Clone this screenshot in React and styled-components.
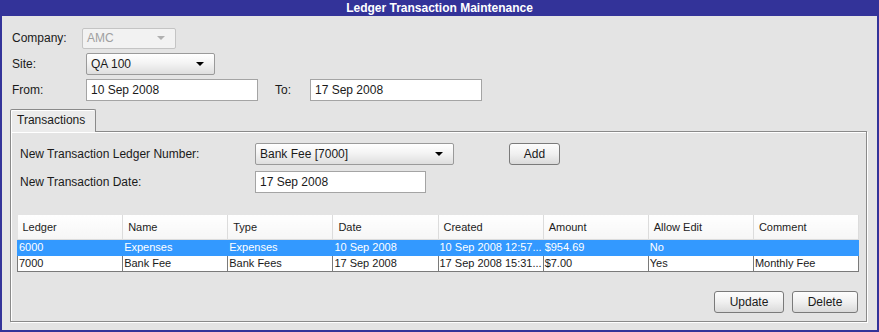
import React from 'react';
import styled, { createGlobalStyle } from 'styled-components';

const GlobalStyle = createGlobalStyle`
  body {
    margin: 0;
    background: #e4e4e4;
    font-family: "Liberation Sans", Arial, sans-serif;
  }
`;

const Window = styled.div`
  width: 879px;
  height: 332px;
  box-sizing: border-box;
  border: 2px solid #333399;
  border-top: none;
  background: #e4e4e4;
  display: flex;
  flex-direction: column;
  font-size: 12px;
  color: #1a1a1a;
`;

const TitleBar = styled.div`
  height: 16px;
  margin: 0 -2px;
  background: #333399;
  color: #fff;
  font-weight: bold;
  font-size: 12px;
  line-height: 16px;
  text-align: center;
`;

const TopForm = styled.div`
  display: flex;
  flex-direction: column;
  gap: 5px;
  padding: 12px 0 0 10px;
`;

const Row = styled.div`
  display: flex;
  align-items: center;
  height: ${(p) => p.$h || 21}px;
`;

const Label = styled.span`
  width: ${(p) => p.$w}px;
  margin-left: ${(p) => p.$ml || 0}px;
  flex-shrink: 0;
  white-space: nowrap;
`;

const Combo = styled.div`
  width: ${(p) => p.$w}px;
  height: ${(p) => p.$h || 21}px;
  box-sizing: border-box;
  border: 1px solid ${(p) => (p.$disabled ? '#c4c4c4' : '#9a9a9a')};
  border-radius: 2px;
  background: ${(p) =>
    p.$disabled ? '#f2f2f2' : 'linear-gradient(#ffffff, #f4f4f4 45%, #dedede)'};
  color: ${(p) => (p.$disabled ? '#a0a0a0' : '#1a1a1a')};
  display: flex;
  align-items: center;
  justify-content: space-between;
  padding: 0 10px 0 4px;
`;

const Arrow = styled.span`
  width: 0;
  height: 0;
  border-left: 4px solid transparent;
  border-right: 4px solid transparent;
  border-top: 4px solid ${(p) => (p.$disabled ? '#b0b0b0' : '#000')};
`;

const TextInput = styled.div`
  width: ${(p) => p.$w}px;
  height: 22px;
  box-sizing: border-box;
  border: 1px solid #a4a4a4;
  background: #fff;
  padding-left: 4px;
  display: flex;
  align-items: center;
`;

const TabSection = styled.div`
  margin: 8px 10px 0 8px;
  display: flex;
  flex-direction: column;
`;

const Tab = styled.div`
  width: 86px;
  height: 23px;
  box-sizing: border-box;
  border: 1px solid #8a8a8a;
  border-bottom: none;
  border-radius: 2px 2px 0 0;
  background: #ebebeb;
  box-shadow: inset 1px 1px 0 #fff;
  padding-left: 6px;
  line-height: 21px;
  margin-bottom: -1px;
  position: relative;
  z-index: 1;
`;

const Panel = styled.div`
  height: 191px;
  box-sizing: border-box;
  border: 1px solid #8a8a8a;
  box-shadow: inset 1px 1px 0 #fff, 1px 1px 0 #fff;
  padding: 11px 8px 0 6px;
  display: flex;
  flex-direction: column;
`;

const PanelForm = styled.div`
  display: flex;
  flex-direction: column;
  gap: 6px;
  padding-left: 3px;
`;

const Button = styled.div`
  width: ${(p) => p.$w}px;
  height: 22px;
  box-sizing: border-box;
  margin-left: ${(p) => p.$ml || 0}px;
  border: 1px solid #7a7a7a;
  border-radius: 3px;
  background: linear-gradient(#fdfdfd, #f0f0f0 50%, #dadada);
  display: flex;
  align-items: center;
  justify-content: center;
  color: #1a1a1a;
`;

const Table = styled.table`
  margin-top: 22px;
  width: 842px;
  border-collapse: collapse;
  table-layout: fixed;
  font-size: 11px;
`;

const Th = styled.th`
  height: 24px;
  padding: 0 0 0 5px;
  text-align: left;
  font-weight: normal;
  background: linear-gradient(#ffffff, #f6f6f6);
  border-right: 1px solid #dcdcdc;
  border-bottom: 1px solid #dcdcdc;
  color: #222;
`;

const Td = styled.td`
  height: 15px;
  padding: 0 0 0 1px;
  white-space: nowrap;
  overflow: hidden;
  background: ${(p) => (p.$sel ? '#3399ff' : '#fff')};
  color: ${(p) => (p.$sel ? '#fff' : '#1a1a1a')};
  border: 1px solid ${(p) => (p.$sel ? '#3399ff' : '#7a7a7a')};
  border-top: none;
  line-height: 15px;
`;

const ButtonBar = styled.div`
  margin-top: 19px;
  display: flex;
  justify-content: flex-end;
  gap: 8px;
`;

const columns = ['Ledger', 'Name', 'Type', 'Date', 'Created', 'Amount', 'Allow Edit', 'Comment'];

const rows = [
  ['6000', 'Expenses', 'Expenses', '10 Sep 2008', '10 Sep 2008 12:57...', '$954.69', 'No', ''],
  ['7000', 'Bank Fee', 'Bank Fees', '17 Sep 2008', '17 Sep 2008 15:31...', '$7.00', 'Yes', 'Monthly Fee'],
];

export default function App() {
  return (
    <>
      <GlobalStyle />
      <Window>
        <TitleBar>Ledger Transaction Maintenance</TitleBar>
        <TopForm>
          <Row $h={20}>
            <Label $w={70}>Company:</Label>
            <Combo $w={94} $h={21} $disabled>
              <span>AMC</span>
              <Arrow $disabled />
            </Combo>
          </Row>
          <Row $h={21}>
            <Label $w={74}>Site:</Label>
            <Combo $w={129} $h={22}>
              <span>QA 100</span>
              <Arrow />
            </Combo>
          </Row>
          <Row $h={22}>
            <Label $w={74}>From:</Label>
            <TextInput $w={172}>10 Sep 2008</TextInput>
            <Label $w={35} $ml={17}>To:</Label>
            <TextInput $w={172}>17 Sep 2008</TextInput>
          </Row>
        </TopForm>
        <TabSection>
          <Tab>Transactions</Tab>
          <Panel>
            <PanelForm>
              <Row $h={22}>
                <Label $w={235}>New Transaction Ledger Number:</Label>
                <Combo $w={199} $h={22}>
                  <span>Bank Fee [7000]</span>
                  <Arrow />
                </Combo>
                <Button $w={51} $ml={55}>Add</Button>
              </Row>
              <Row $h={22}>
                <Label $w={235}>New Transaction Date:</Label>
                <TextInput $w={171}>17 Sep 2008</TextInput>
              </Row>
            </PanelForm>
            <Table>
              <thead>
                <tr>
                  {columns.map((c) => (
                    <Th key={c}>{c}</Th>
                  ))}
                </tr>
              </thead>
              <tbody>
                {rows.map((r, i) => (
                  <tr key={r[0]}>
                    {r.map((v, j) => (
                      <Td key={j} $sel={i === 0}>{v}</Td>
                    ))}
                  </tr>
                ))}
              </tbody>
            </Table>
            <ButtonBar>
              <Button $w={70}>Update</Button>
              <Button $w={66}>Delete</Button>
            </ButtonBar>
          </Panel>
        </TabSection>
      </Window>
    </>
  );
}
